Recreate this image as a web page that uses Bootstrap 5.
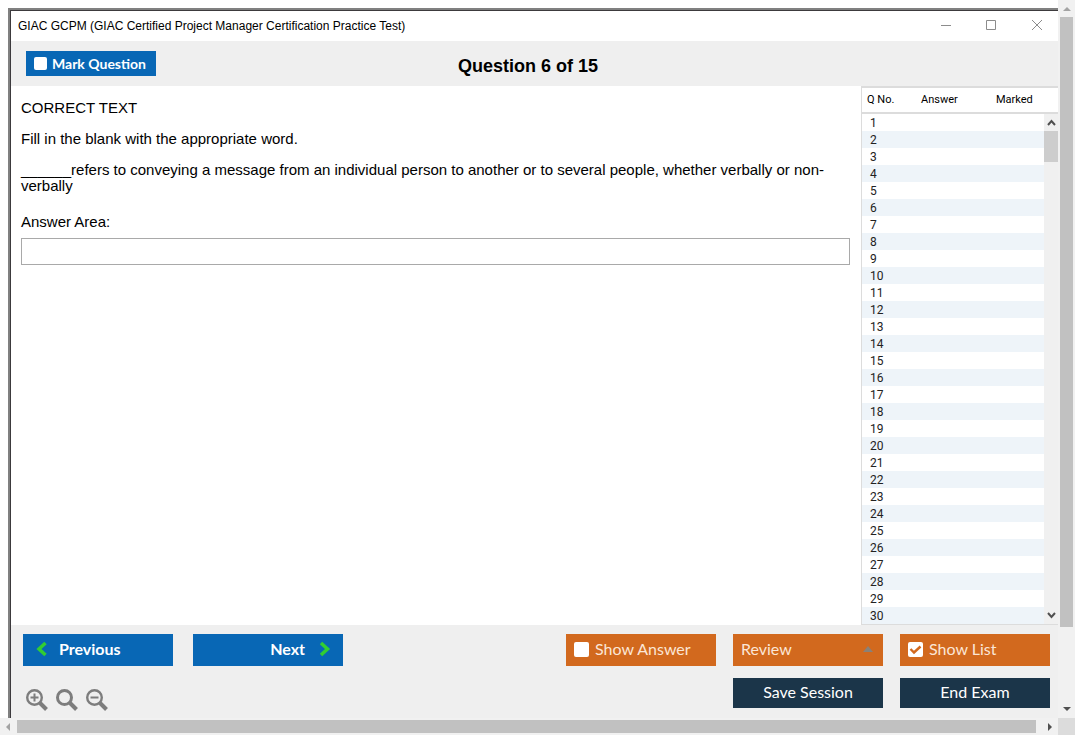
<!DOCTYPE html>
<html lang="en">
<head>
<meta charset="utf-8">
<meta name="viewport" content="width=device-width, initial-scale=1">
<title>GIAC GCPM Practice Test</title>
<link href="https://cdn.jsdelivr.net/npm/bootstrap@5.3.0/dist/css/bootstrap.min.css" rel="stylesheet">
<style>
  :root { --blue: #0867b5; --orange: #d2691e; --navy: #1b3549; --chrome: #efefef; }
  body { font-family: "Liberation Sans", Arial, sans-serif; font-size: 15px; line-height: 16px; color: #000; background: #fff; }
  svg { display: block; }
  .viewport-grid { display: grid; grid-template: minmax(0, 1fr) 17px / minmax(0, 1fr) 17px; min-height: 100vh; }
  .page-area { padding: 8px 0 0 8px; }
  .exam-window { border-style: solid; border-color: #808080; border-width: 2px 0 0 2px; box-shadow: inset 1px 1px #3c3a3d; padding: 1px 0 0 1px; }
  .title-bar { height: 30px; font-size: 12px; padding: 0 14px 0 7px; }
  .win-controls { gap: 33px; }
  .win-btn { border: 0; background: none; padding: 0; color: #8c8c8c; }
  .exam-header { background: var(--chrome); height: 45px; display: grid; grid-template-columns: 1fr auto 1fr; padding: 0 28px 0 15px; }
  .exam-header h1 { font-size: 18px; line-height: 24px; font-weight: 700; margin: 4px 0 0; }
  .exam-btn { border: 0; border-radius: 0; font-family: Lato, "Noto Sans", sans-serif; font-size: 16px; line-height: 20px; color: #fff; height: 32px; width: 150px; padding: 0 8px 2px; }
  .blue-btn { background: var(--blue); font-weight: 700; }
  .orange-btn { background: var(--orange); color: #fbe6d6; gap: 6px; }
  .navy-btn { background: var(--navy); height: 30px; text-align: center; }
  .exam-btn:hover { filter: brightness(1.1); }
  .mark-slot { padding-top: 10px; }
  .mark-btn { height: 25px; width: 130px; font-size: 14px; gap: 5px; padding-bottom: 0; cursor: pointer; }
  .tick { appearance: none; flex: none; width: 15px; height: 15px; margin: 0; border-radius: 2px; background: #fff center / 13px no-repeat; }
  .tick-small { width: 13px; height: 13px; }
  .tick:checked { background-image: url("data:image/svg+xml,%3Csvg xmlns='http://www.w3.org/2000/svg' viewBox='0 0 13 13'%3E%3Cpath d='M1.5 6 5 9.5 11.5 3.5' fill='none' stroke='%23d2691e' stroke-width='2.4'/%3E%3C/svg%3E"); }
  .question-pane { padding: 14px 11px 14px 10px; }
  .question-pane p { margin: 0 0 15px; }
  .answer-box { border: 1px solid #a9a9a9; height: 27px; border-radius: 0; }
  .list-pane { width: 197px; flex: none; border: solid #dcdcdc; border-width: 2px 0 1px 1px; }
  .q-table { width: 100%; font-family: Roboto, sans-serif; font-size: 11px; line-height: 15px; color: #222; border-collapse: separate; border-spacing: 0; table-layout: fixed; }
  .q-table th { font-weight: 400; height: 26px; padding: 0 0 2px 5px; border-bottom: 2px solid #dcdcdc; color: #000; }
  .q-table td { height: 17px; padding: 2px 0 0 8px; font-size: 12px; }
  .q-table tbody tr:nth-child(even) td { background: #eef4f9; }
  .list-scroll { width: 14px; top: 26px; right: 0; bottom: 0; background: #f0f0f0; color: #505050; }
  .list-thumb { background: #cdcdcd; height: 31px; }
  .exam-footer { background: var(--chrome); padding: 9px 8px 0 12px; min-height: 93px; }
  .footer-right { display: grid; grid-template-columns: repeat(3, 150px); gap: 12px 17px; }
  .next-btn { padding-right: 10px; }
  .zoom-row { margin-top: 23px; padding-left: 3px; }
  .zoom-btn { border: 0; background: none; padding: 0; }
  .bar { background: #f1f1f1; color: #505050; }
  .bar-y { padding: 7px 2px 7px; }
  .bar-y .thumb { height: 610px; margin-top: 6px; }
  .bar-x { padding: 0 6px; gap: 7px; }
  .thumb { background: #c1c1c1; }
  .faded { color: #a3a3a3; }
  .bar-x .thumb { height: 13px; margin-right: 5px; }
  .corner { background: #dcdcdc; }
</style>
</head>
<body>
<div class="viewport-grid">
  <div class="page-area">
    <main class="exam-window d-flex flex-column h-100">
      <header class="title-bar d-flex align-items-center justify-content-between">
        <span>GIAC GCPM (GIAC Certified Project Manager Certification Practice Test)</span>
        <div class="win-controls d-flex">
          <button class="win-btn" aria-label="Minimize"><svg width="12" height="12" stroke="currentColor"><path d="M1 5.500h10"/></svg></button>
          <button class="win-btn" aria-label="Maximize"><svg width="12" height="12" fill="none" stroke="currentColor"><path d="M1.500 .5h9v9h-9z"/></svg></button>
          <button class="win-btn" aria-label="Close"><svg width="14" height="12" fill="none" stroke="currentColor"><path d="M2 0l10 10M12 0L2 10"/></svg></button>
        </div>
      </header>
      <div class="exam-header">
        <div class="mark-slot"><label class="exam-btn blue-btn mark-btn d-flex align-items-center" for="mark"><input class="tick tick-small" type="checkbox" id="mark"><span>Mark Question</span></label></div>
        <h1 class="align-self-center">Question 6 of 15</h1>
      </div>
      <div class="d-flex flex-grow-1">
        <section class="question-pane flex-grow-1">
          <p>CORRECT TEXT</p>
          <p>Fill in the blank with the appropriate word.</p>
          <p class="mb-3 pb-1">______refers to conveying a message from an individual person to another or to several people, whether verbally or non-verbally</p>
          <label class="d-block mb-2" for="answer">Answer Area:</label>
          <input class="answer-box w-100 d-block" type="text" id="answer">
        </section>
        <aside class="list-pane position-relative">
          <table class="q-table">
            <colgroup><col style="width:54px"><col style="width:75px"><col></colgroup>
            <thead><tr><th scope="col">Q No.</th><th scope="col">Answer</th><th scope="col">Marked</th></tr></thead>
            <tbody id="rows"></tbody>
          </table>
          <div class="list-scroll position-absolute" aria-hidden="true">
            <div class="d-flex flex-column h-100">
              <svg class="mx-auto my-1" width="9" height="9" fill="none" stroke="currentColor" stroke-width="2"><path d="M1 7l3.500-4L8 7"/></svg>
              <div class="list-thumb"></div>
              <svg class="mx-auto mt-auto mb-1" width="9" height="9" fill="none" stroke="currentColor" stroke-width="2"><path d="M1 2l3.500 4L8 2"/></svg>
            </div>
          </div>
        </aside>
      </div>
      <footer class="exam-footer d-flex justify-content-between">
        <div>
          <div class="d-flex">
            <button class="exam-btn blue-btn d-flex align-items-center me-3"><svg class="ms-1 me-2" width="16" height="16" fill="none" stroke="#32cd32" stroke-width="3.500"><path d="M10.500 2L4 8l6.500 6"/></svg><span>Previous</span></button>
            <button class="exam-btn blue-btn next-btn d-flex align-items-center justify-content-end ms-1"><span class="me-1">Next</span><svg class="ms-2" width="16" height="16" fill="none" stroke="#32cd32" stroke-width="3.500"><path d="M4 2l6.500 6L4 14"/></svg></button>
          </div>
          <div class="zoom-row d-flex gap-2">
            <button class="zoom-btn" aria-label="Zoom in"><svg width="22" height="22" fill="none" stroke="#7d7d7d"><circle cx="8.500" cy="8.500" r="7.300" stroke-width="2.400"/><path d="M14 14l6.500 6.500" stroke-width="4"/><path d="M4.500 8.500h8M8.500 4.500v8" stroke-width="2"/></svg></button>
            <button class="zoom-btn" aria-label="Reset zoom"><svg width="22" height="22" fill="none" stroke="#7d7d7d"><circle cx="8.500" cy="8.500" r="7" stroke-width="3"/><path d="M14 14l6.500 6.500" stroke-width="4"/></svg></button>
            <button class="zoom-btn" aria-label="Zoom out"><svg width="22" height="22" fill="none" stroke="#7d7d7d"><circle cx="8.500" cy="8.500" r="7.300" stroke-width="2.400"/><path d="M14 14l6.500 6.500" stroke-width="4"/><path d="M4.500 8.500h8" stroke-width="2"/></svg></button>
          </div>
        </div>
        <div class="footer-right align-content-start">
          <label class="exam-btn orange-btn d-flex align-items-center" for="showAnswer"><input class="tick" type="checkbox" id="showAnswer">Show Answer</label>
          <button class="exam-btn orange-btn d-flex align-items-center justify-content-between">Review<svg width="14" height="8"><path d="M2 7l5-6 5 6z" fill="#8a8178"/></svg></button>
          <label class="exam-btn orange-btn d-flex align-items-center" for="showList"><input class="tick" type="checkbox" id="showList" checked>Show List</label>
          <span></span>
          <button class="exam-btn navy-btn">Save Session</button>
          <button class="exam-btn navy-btn">End Exam</button>
        </div>
      </footer>
    </main>
  </div>
  <div class="bar bar-y d-flex flex-column" aria-hidden="true">
    <svg class="mx-auto faded" width="8" height="4" fill="currentColor"><path d="M0 4l4-4 4 4z"/></svg>
    <div class="thumb"></div>
    <svg class="mx-auto mt-auto" width="8" height="4" fill="currentColor"><path d="M0 0l4 4 4-4z"/></svg>
  </div>
  <div class="bar bar-x d-flex align-items-center" aria-hidden="true">
    <svg class="faded flex-shrink-0" width="4" height="8" fill="currentColor"><path d="M4 0L0 4l4 4z"/></svg>
    <div class="thumb flex-grow-1"></div>
    <svg class="flex-shrink-0" width="4" height="8" fill="currentColor"><path d="M0 0l4 4-4 4z"/></svg>
  </div>
  <div class="corner"></div>
</div>
<script src="https://cdn.jsdelivr.net/npm/bootstrap@5.3.0/dist/js/bootstrap.bundle.min.js"></script>
<script>
  const rows = document.getElementById("rows");
  for (let n = 1; n <= 30; n++) {
    const row = rows.insertRow();
    row.insertCell().textContent = n;
    row.insertCell();
    row.insertCell();
  }
</script>
</body>
</html>
